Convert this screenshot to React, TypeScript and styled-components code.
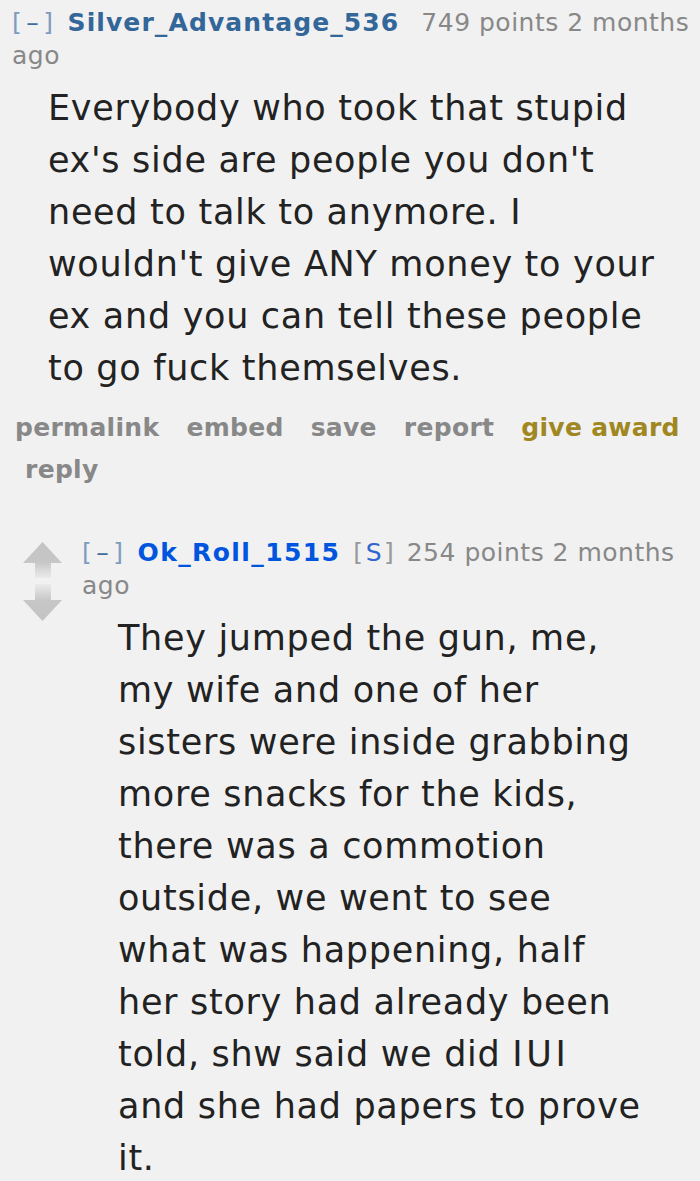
import React from 'react';
import styled, { createGlobalStyle } from 'styled-components';

const GlobalStyle = createGlobalStyle`
    html, body {
        margin: 0;
        padding: 0;
        background: #f1f1f1;
    }
    body {
        font-family: 'DejaVu Sans', Verdana, sans-serif;
    }
`;

const Page = styled.div`
    padding: 6px 0 0 12px;
    width: 700px;
    box-sizing: border-box;
`;

const Comment = styled.div`
    display: flex;
    align-items: flex-start;
`;

const Votes = styled.div`
    width: 70px;
    flex: none;
    display: flex;
    flex-direction: column;
    align-items: flex-start;
    gap: 5px;
    padding: 6px 0 0 11px;
    box-sizing: border-box;
`;

const Entry = styled.div`
    flex: 1;
    min-width: 0;
`;

const Tagline = styled.p`
    margin: 0;
    font-size: 25px;
    line-height: 33px;
    color: #888;
    letter-spacing: 0.5px;
`;

const Expand = styled.span`
    color: #7d9cc0;
    margin-right: 14px;

    i {
        font-style: normal;
        color: #3f6d9e;
        padding: 0 4px;
    }
`;

const Author = styled.span<{ $submitter?: boolean }>`
    font-weight: bold;
    letter-spacing: ${(p) => (p.$submitter ? '1.4px' : '1.1px')};
    color: ${(p) => (p.$submitter ? '#0055df' : '#336699')};
    margin-right: ${(p) => (p.$submitter ? '13px' : '22px')};
`;

const Attr = styled.span`
    color: #999;
    margin-right: 4px;

    b {
        font-weight: normal;
        color: #3367d0;
        padding: 0 2px;
    }
`;

const Body = styled.div<{ $width: number }>`
    width: ${(p) => p.$width}px;
    margin: 10px 0 0 36px;
    font-size: 35px;
    letter-spacing: 0.7px;
    line-height: 52px;
    color: #222;
`;

// Verdana's serifed capital I is much wider than DejaVu's
const Caps = styled.span`
    letter-spacing: 3.7px;
`;

const Buttons = styled.ul`
    list-style: none;
    margin: 13px 0 0 3px;
    padding: 0;
    display: flex;
    flex-wrap: wrap;
    column-gap: 17px;
    width: 682px;
`;

const Button = styled.li<{ $gold?: boolean }>`
    font-size: 25px;
    letter-spacing: 0.3px;
    line-height: 42px;
    font-weight: bold;
    color: ${(p) => (p.$gold ? '#a08722' : '#888')};
    padding-left: 10px;

    &:first-child {
        padding-left: 0;
    }
`;

const Reply = styled.div`
    margin-top: 45px;
`;

const Arrow = ({ down }: { down?: boolean }) => (
    <svg width="40" height="37" viewBox="0 0 40 37">
        <defs>
            <linearGradient id={down ? 'gd' : 'gu'} x1="0" y1={down ? '1' : '0'} x2="0" y2={down ? '0' : '1'}>
                <stop offset="0" stopColor="#c4c4c4" />
                <stop offset="0.55" stopColor="#c6c6c6" />
                <stop offset="1" stopColor="#ebebeb" />
            </linearGradient>
        </defs>
        {down ? (
            <path d="M12 0 H28 V16 H39 L19.5 37 L0 16 H12 Z" fill="url(#gd)" />
        ) : (
            <path d="M19.5 0 L39 21 H28 V36 H12 V21 H0 Z" fill="url(#gu)" />
        )}
    </svg>
);

export default function App() {
    return (
        <Page>
            <GlobalStyle />
            <Entry>
                <Tagline>
                    <Expand>
                        [<i>–</i>]
                    </Expand>
                    <Author>Silver_Advantage_536</Author>
                    749 points 2 months ago
                </Tagline>
                <Body $width={625}>
                    Everybody who took that stupid ex's side are people you don't need to talk to anymore. I
                    wouldn't give ANY money to your ex and you can tell these people to go fuck themselves.
                </Body>
                <Buttons>
                    <Button>permalink</Button>
                    <Button>embed</Button>
                    <Button>save</Button>
                    <Button>report</Button>
                    <Button $gold>give award</Button>
                    <Button>reply</Button>
                </Buttons>
            </Entry>
            <Reply>
                <Comment>
                    <Votes>
                        <Arrow />
                        <Arrow down />
                    </Votes>
                    <Entry>
                        <Tagline>
                            <Expand>
                                [<i>–</i>]
                            </Expand>
                            <Author $submitter>Ok_Roll_1515</Author>
                            <Attr>
                                [<b>S</b>]
                            </Attr>{' '}
                            254 points 2 months ago
                        </Tagline>
                        <Body $width={527}>
                            They jumped the gun, me, my wife and one of her sisters were inside grabbing more
                            snacks for the kids, there was a commotion outside, we went to see what was
                            happening, half her story had already been told, shw said we did <Caps>IUI</Caps> and
                            she had papers to prove it.
                        </Body>
                    </Entry>
                </Comment>
            </Reply>
        </Page>
    );
}
